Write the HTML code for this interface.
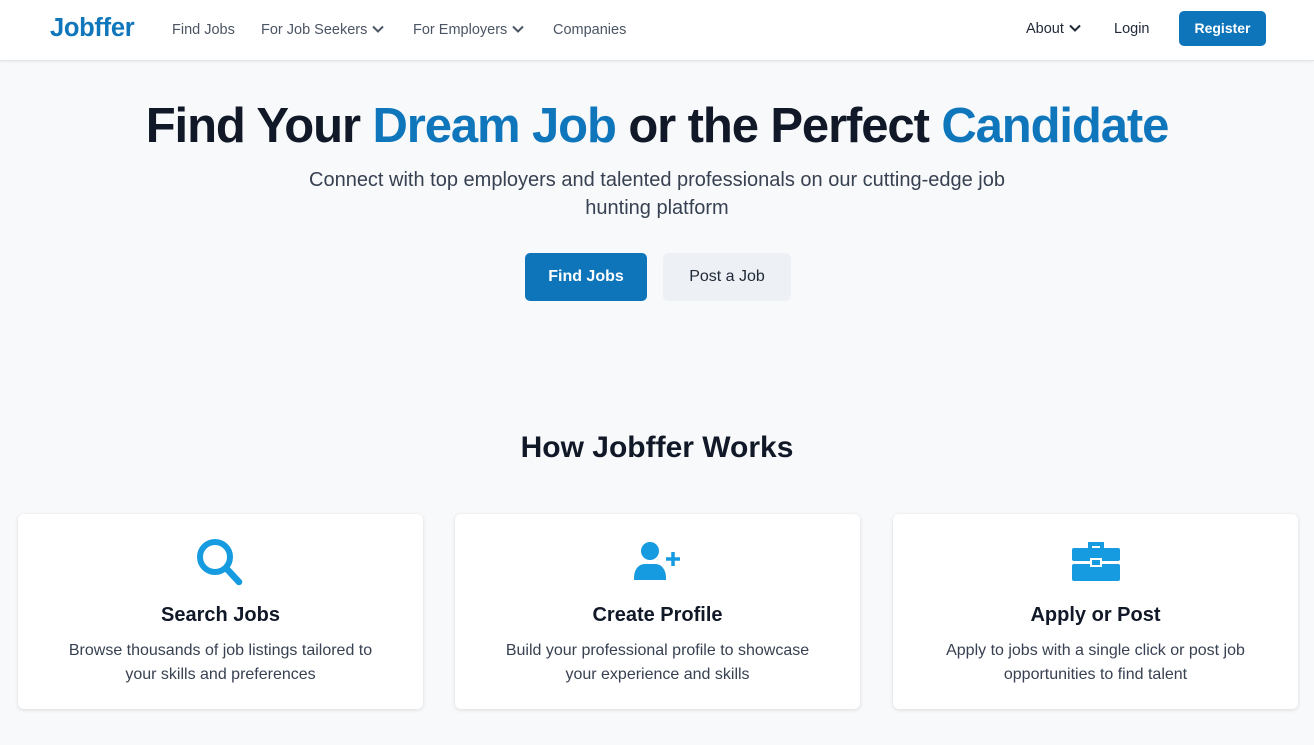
<!DOCTYPE html>
<html><head><meta charset="utf-8"><style>
*{box-sizing:border-box;margin:0;padding:0}
body{width:1314px;height:745px;overflow:hidden;background:#f8f9fb;font-family:"Liberation Sans",sans-serif;color:#111827}
nav{height:61px;background:#fff;border-bottom:1px solid #e2e4e8;box-shadow:0 1px 3px rgba(0,0,0,.06);position:relative}
.logo{position:absolute;left:50px;top:14px;font-size:25.5px;font-weight:bold;color:#0f76bc;letter-spacing:-0.3px}
.nl{position:absolute;top:22px;font-size:14.5px;color:#4b5563}
.nl svg{vertical-align:-2px;margin-left:4px}
.nr{position:absolute;top:21px;font-size:14.5px;color:#1f2937}
.reg{position:absolute;left:1179px;top:11px;width:87px;height:35px;background:#0e75bb;color:#fff;border-radius:5px;font-size:14px;font-weight:bold;text-align:center;line-height:35px}
h1{position:absolute;left:0;width:1314px;top:98px;text-align:center;font-size:49px;font-weight:bold;letter-spacing:-1.1px;color:#111827}
h1 span{color:#0f76bc}
.sub{position:absolute;left:282px;width:750px;top:166px;text-align:center;font-size:20px;line-height:28px;color:#374151}
.b1{position:absolute;left:525px;top:253px;width:122px;height:48px;background:#0e75bb;color:#fff;border-radius:5px;font-size:16px;font-weight:bold;text-align:center;line-height:48px}
.b2{position:absolute;left:663px;top:253px;width:128px;height:48px;background:#edf0f4;color:#1f2937;border-radius:5px;font-size:16px;text-align:center;line-height:48px}
h2{position:absolute;left:0;width:1314px;top:431px;text-align:center;font-size:30px;font-weight:bold;color:#111827}
.card{position:absolute;top:514px;width:405px;height:195px;background:#fff;border-radius:6px;box-shadow:0 1px 4px rgba(0,0,0,.12);text-align:center}
.card svg{position:absolute;top:24px;left:50%;transform:translateX(-50%)}
.card h3{position:absolute;top:90px;width:100%;font-size:20px;font-weight:bold;color:#111827}
.card p{position:absolute;top:125px;width:100%;padding:0 40px;font-size:16px;line-height:24px;color:#374151}
</style></head><body>
<nav>
<div class="logo">Jobffer</div>
<div class="nl" style="left:172px">Find Jobs</div>
<div class="nl" style="left:261px">For Job Seekers<svg width="14" height="14" viewBox="0 0 14 14"><path d="M2 4.5l5 5 5-5" fill="none" stroke="#4b5563" stroke-width="2"/></svg></div>
<div class="nl" style="left:413px">For Employers<svg width="14" height="14" viewBox="0 0 14 14"><path d="M2 4.5l5 5 5-5" fill="none" stroke="#4b5563" stroke-width="2"/></svg></div>
<div class="nl" style="left:553px">Companies</div>
<div class="nr" style="left:1026px">About<svg width="14" height="14" viewBox="0 0 14 14" style="vertical-align:-2px;margin-left:4px"><path d="M2 4.5l5 5 5-5" fill="none" stroke="#1f2937" stroke-width="2"/></svg></div>
<div class="nr" style="left:1114px">Login</div>
<div class="reg">Register</div>
</nav>
<h1>Find Your <span>Dream Job</span> or the Perfect <span>Candidate</span></h1>
<div class="sub">Connect with top employers and talented professionals on our cutting-edge job hunting platform</div>
<div class="b1">Find Jobs</div>
<div class="b2">Post a Job</div>
<h2>How Jobffer Works</h2>
<div class="card" style="left:18px">
<svg width="52" height="50" viewBox="0 0 52 50"><circle cx="20" cy="19" r="15" fill="none" stroke="#169be0" stroke-width="6"/><path d="M31 30l13 14" stroke="#169be0" stroke-width="6.5" stroke-linecap="round"/></svg>
<h3>Search Jobs</h3><p>Browse thousands of job listings tailored to your skills and preferences</p></div>
<div class="card" style="left:455px">
<svg width="50" height="48" viewBox="0 0 50 48"><circle cx="17" cy="13" r="9" fill="#169be0"/><path d="M1 40c0-9 5-14 11-14h10c6 0 11 5 11 14v2H1z" fill="#169be0"/><path d="M40 14v14M33 21h14" stroke="#169be0" stroke-width="3.5"/></svg>
<h3>Create Profile</h3><p>Build your professional profile to showcase your experience and skills</p></div>
<div class="card" style="left:893px">
<svg width="50" height="48" viewBox="0 0 50 48"><path d="M17 4h16v6h-4V8h-8v2h-4z" fill="#169be0"/><rect x="1" y="10" width="48" height="13" rx="2" fill="#169be0"/><rect x="1" y="26" width="48" height="17" rx="2" fill="#169be0"/><rect x="20" y="21" width="10" height="7" fill="#169be0" stroke="#fff" stroke-width="2"/></svg>
<h3>Apply or Post</h3><p>Apply to jobs with a single click or post job opportunities to find talent</p></div>
</body></html>
